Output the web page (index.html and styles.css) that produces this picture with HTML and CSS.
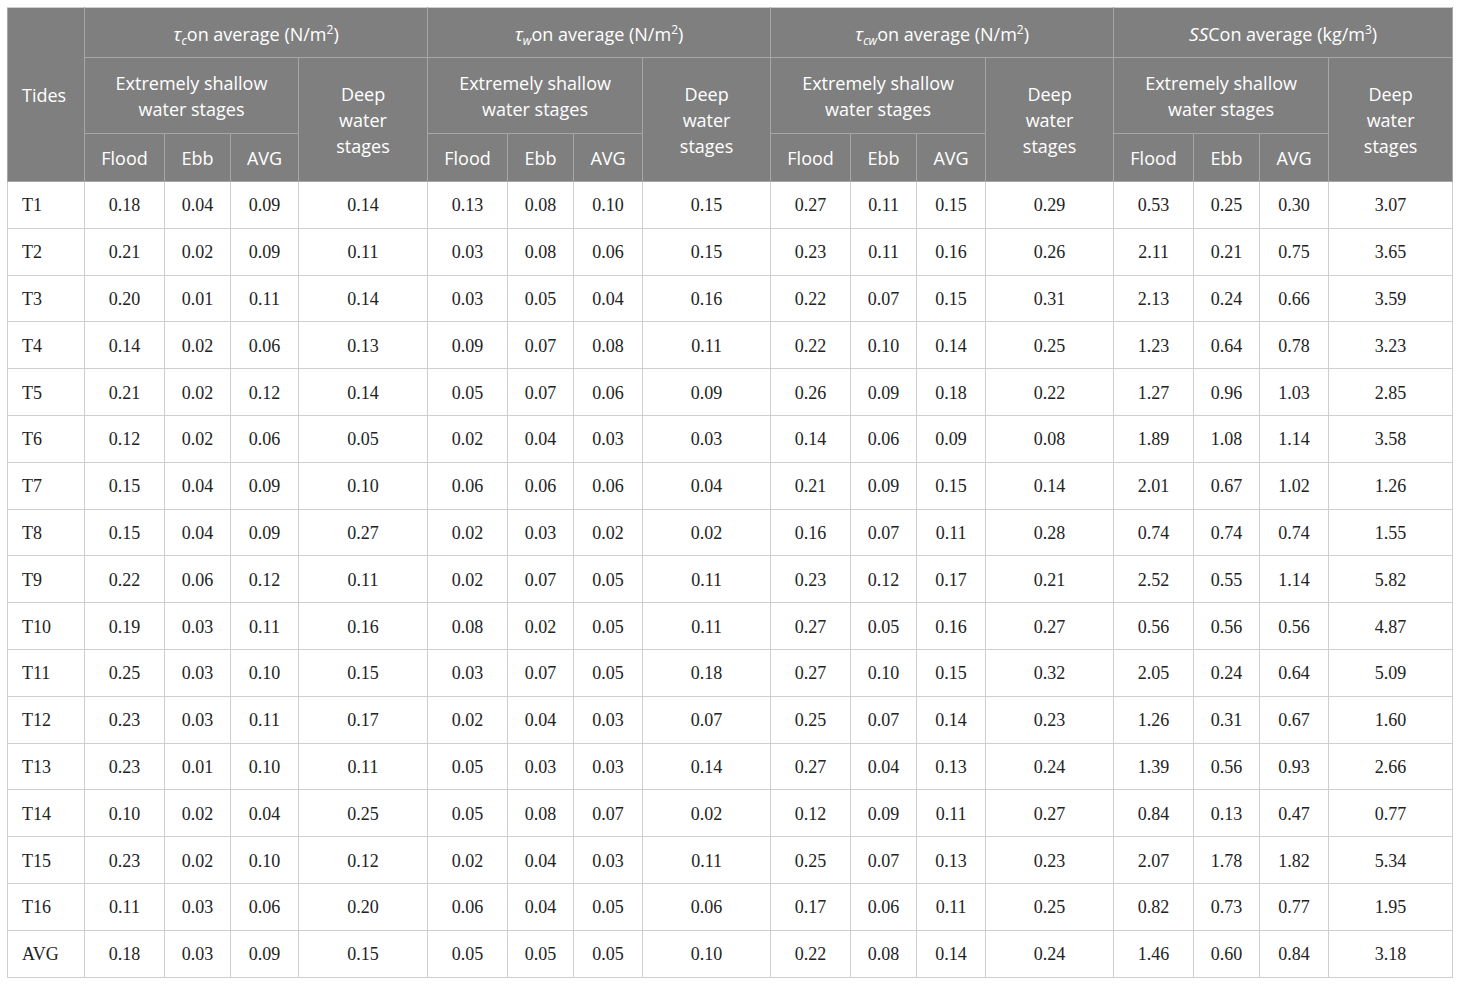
FILE: index.html
```html
<!DOCTYPE html>
<html lang="en">
<head>
    <meta charset="UTF-8">
    <meta name="viewport" content="width=device-width, initial-scale=1.0">
    <title>Bed shear stress and SSC</title>
    <link rel="stylesheet" href="styles.css">
</head>
<body>
  <div class="wrap">
    <table class="data">
      <colgroup>
        <col class="c-tide">
        <col class="c-fl"><col class="c-eb"><col class="c-av"><col class="c-dp">
        <col class="c-fl"><col class="c-eb"><col class="c-av2"><col class="c-dp2">
        <col class="c-fl"><col class="c-eb"><col class="c-av2"><col class="c-dp2">
        <col class="c-fl"><col class="c-eb"><col class="c-av2"><col class="c-dp3">
      </colgroup>
      <thead>
        <tr class="h1">
          <th rowspan="3" class="tides">Tides</th>
          <th colspan="4"><i class="sym">τ<sub>c</sub></i>on average (N/m<sup>2</sup>)</th>
          <th colspan="4"><i class="sym">τ<sub>w</sub></i>on average (N/m<sup>2</sup>)</th>
          <th colspan="4"><i class="sym">τ<sub>cw</sub></i>on average (N/m<sup>2</sup>)</th>
          <th colspan="4"><i class="sym">SS</i>Con average (kg/m<sup>3</sup>)</th>
        </tr>
        <tr class="h2">
          <th colspan="3">Extremely shallow<br>water stages</th>
          <th rowspan="2">Deep<br>water<br>stages</th>
          <th colspan="3">Extremely shallow<br>water stages</th>
          <th rowspan="2">Deep<br>water<br>stages</th>
          <th colspan="3">Extremely shallow<br>water stages</th>
          <th rowspan="2">Deep<br>water<br>stages</th>
          <th colspan="3">Extremely shallow<br>water stages</th>
          <th rowspan="2">Deep<br>water<br>stages</th>
        </tr>
        <tr class="h3">
          <th>Flood</th><th>Ebb</th><th>AVG</th>
          <th>Flood</th><th>Ebb</th><th>AVG</th>
          <th>Flood</th><th>Ebb</th><th>AVG</th>
          <th>Flood</th><th>Ebb</th><th>AVG</th>
        </tr>
      </thead>
      <tbody>
        <tr><td>T1</td><td>0.18</td><td>0.04</td><td>0.09</td><td>0.14</td><td>0.13</td><td>0.08</td><td>0.10</td><td>0.15</td><td>0.27</td><td>0.11</td><td>0.15</td><td>0.29</td><td>0.53</td><td>0.25</td><td>0.30</td><td>3.07</td></tr>
        <tr><td>T2</td><td>0.21</td><td>0.02</td><td>0.09</td><td>0.11</td><td>0.03</td><td>0.08</td><td>0.06</td><td>0.15</td><td>0.23</td><td>0.11</td><td>0.16</td><td>0.26</td><td>2.11</td><td>0.21</td><td>0.75</td><td>3.65</td></tr>
        <tr><td>T3</td><td>0.20</td><td>0.01</td><td>0.11</td><td>0.14</td><td>0.03</td><td>0.05</td><td>0.04</td><td>0.16</td><td>0.22</td><td>0.07</td><td>0.15</td><td>0.31</td><td>2.13</td><td>0.24</td><td>0.66</td><td>3.59</td></tr>
        <tr><td>T4</td><td>0.14</td><td>0.02</td><td>0.06</td><td>0.13</td><td>0.09</td><td>0.07</td><td>0.08</td><td>0.11</td><td>0.22</td><td>0.10</td><td>0.14</td><td>0.25</td><td>1.23</td><td>0.64</td><td>0.78</td><td>3.23</td></tr>
        <tr><td>T5</td><td>0.21</td><td>0.02</td><td>0.12</td><td>0.14</td><td>0.05</td><td>0.07</td><td>0.06</td><td>0.09</td><td>0.26</td><td>0.09</td><td>0.18</td><td>0.22</td><td>1.27</td><td>0.96</td><td>1.03</td><td>2.85</td></tr>
        <tr><td>T6</td><td>0.12</td><td>0.02</td><td>0.06</td><td>0.05</td><td>0.02</td><td>0.04</td><td>0.03</td><td>0.03</td><td>0.14</td><td>0.06</td><td>0.09</td><td>0.08</td><td>1.89</td><td>1.08</td><td>1.14</td><td>3.58</td></tr>
        <tr><td>T7</td><td>0.15</td><td>0.04</td><td>0.09</td><td>0.10</td><td>0.06</td><td>0.06</td><td>0.06</td><td>0.04</td><td>0.21</td><td>0.09</td><td>0.15</td><td>0.14</td><td>2.01</td><td>0.67</td><td>1.02</td><td>1.26</td></tr>
        <tr><td>T8</td><td>0.15</td><td>0.04</td><td>0.09</td><td>0.27</td><td>0.02</td><td>0.03</td><td>0.02</td><td>0.02</td><td>0.16</td><td>0.07</td><td>0.11</td><td>0.28</td><td>0.74</td><td>0.74</td><td>0.74</td><td>1.55</td></tr>
        <tr><td>T9</td><td>0.22</td><td>0.06</td><td>0.12</td><td>0.11</td><td>0.02</td><td>0.07</td><td>0.05</td><td>0.11</td><td>0.23</td><td>0.12</td><td>0.17</td><td>0.21</td><td>2.52</td><td>0.55</td><td>1.14</td><td>5.82</td></tr>
        <tr><td>T10</td><td>0.19</td><td>0.03</td><td>0.11</td><td>0.16</td><td>0.08</td><td>0.02</td><td>0.05</td><td>0.11</td><td>0.27</td><td>0.05</td><td>0.16</td><td>0.27</td><td>0.56</td><td>0.56</td><td>0.56</td><td>4.87</td></tr>
        <tr><td>T11</td><td>0.25</td><td>0.03</td><td>0.10</td><td>0.15</td><td>0.03</td><td>0.07</td><td>0.05</td><td>0.18</td><td>0.27</td><td>0.10</td><td>0.15</td><td>0.32</td><td>2.05</td><td>0.24</td><td>0.64</td><td>5.09</td></tr>
        <tr><td>T12</td><td>0.23</td><td>0.03</td><td>0.11</td><td>0.17</td><td>0.02</td><td>0.04</td><td>0.03</td><td>0.07</td><td>0.25</td><td>0.07</td><td>0.14</td><td>0.23</td><td>1.26</td><td>0.31</td><td>0.67</td><td>1.60</td></tr>
        <tr><td>T13</td><td>0.23</td><td>0.01</td><td>0.10</td><td>0.11</td><td>0.05</td><td>0.03</td><td>0.03</td><td>0.14</td><td>0.27</td><td>0.04</td><td>0.13</td><td>0.24</td><td>1.39</td><td>0.56</td><td>0.93</td><td>2.66</td></tr>
        <tr><td>T14</td><td>0.10</td><td>0.02</td><td>0.04</td><td>0.25</td><td>0.05</td><td>0.08</td><td>0.07</td><td>0.02</td><td>0.12</td><td>0.09</td><td>0.11</td><td>0.27</td><td>0.84</td><td>0.13</td><td>0.47</td><td>0.77</td></tr>
        <tr><td>T15</td><td>0.23</td><td>0.02</td><td>0.10</td><td>0.12</td><td>0.02</td><td>0.04</td><td>0.03</td><td>0.11</td><td>0.25</td><td>0.07</td><td>0.13</td><td>0.23</td><td>2.07</td><td>1.78</td><td>1.82</td><td>5.34</td></tr>
        <tr><td>T16</td><td>0.11</td><td>0.03</td><td>0.06</td><td>0.20</td><td>0.06</td><td>0.04</td><td>0.05</td><td>0.06</td><td>0.17</td><td>0.06</td><td>0.11</td><td>0.25</td><td>0.82</td><td>0.73</td><td>0.77</td><td>1.95</td></tr>
        <tr><td>AVG</td><td>0.18</td><td>0.03</td><td>0.09</td><td>0.15</td><td>0.05</td><td>0.05</td><td>0.05</td><td>0.10</td><td>0.22</td><td>0.08</td><td>0.14</td><td>0.24</td><td>1.46</td><td>0.60</td><td>0.84</td><td>3.18</td></tr>
      </tbody>
    </table>
  </div>
</body>
</html>
```

FILE: styles.css
```css
*{
    box-sizing: border-box;
}
body{
    margin: 0;
    background: #fff;
}
.wrap{
    padding: 7px 0 0 7px;
}
.data{
    border-collapse: collapse;
    table-layout: fixed;
    width: 1446px;
}
.c-tide{ width: 77px; }
.c-fl{ width: 80px; }
.c-eb{ width: 66px; }
.c-av{ width: 68px; }
.c-av2{ width: 69px; }
.c-dp{ width: 129px; }
.c-dp2{ width: 128px; }
.c-dp3{ width: 124px; }

.data th{
    background: #7f7f7f;
    color: #fff;
    font-family: "Open Sans", "Noto Sans", sans-serif;
    font-weight: normal;
    font-size: 18px;
    line-height: 26px;
    border: 1px solid #a6a6a6;
    text-align: center;
    padding: 0 4px;
}
.data thead tr:first-child th{
    border-top-color: #cfcfcf;
}
.h1 th{
    height: 50px;
    padding-top: 3px;
}
.h2 th{
    height: 76px;
}
.h3 th{
    height: 48px;
}
.data th.tides{
    text-align: left;
    padding-left: 14px;
    padding-top: 0;
}
.sym{
    font-style: italic;
    font-size: 19px;
}
.sym sub{
    font-size: 12px;
    vertical-align: -4px;
    line-height: 0;
}
.data th sup{
    font-size: 12px;
    vertical-align: 7px;
    line-height: 0;
}
.data td{
    font-family: "Liberation Serif", serif;
    font-size: 18px;
    color: #222;
    text-align: center;
    height: 46.8px;
    border: 1px solid #cfcfcf;
    padding: 2px 0 0;
}
.data td:first-child{
    text-align: left;
    padding-left: 14px;
}
```
